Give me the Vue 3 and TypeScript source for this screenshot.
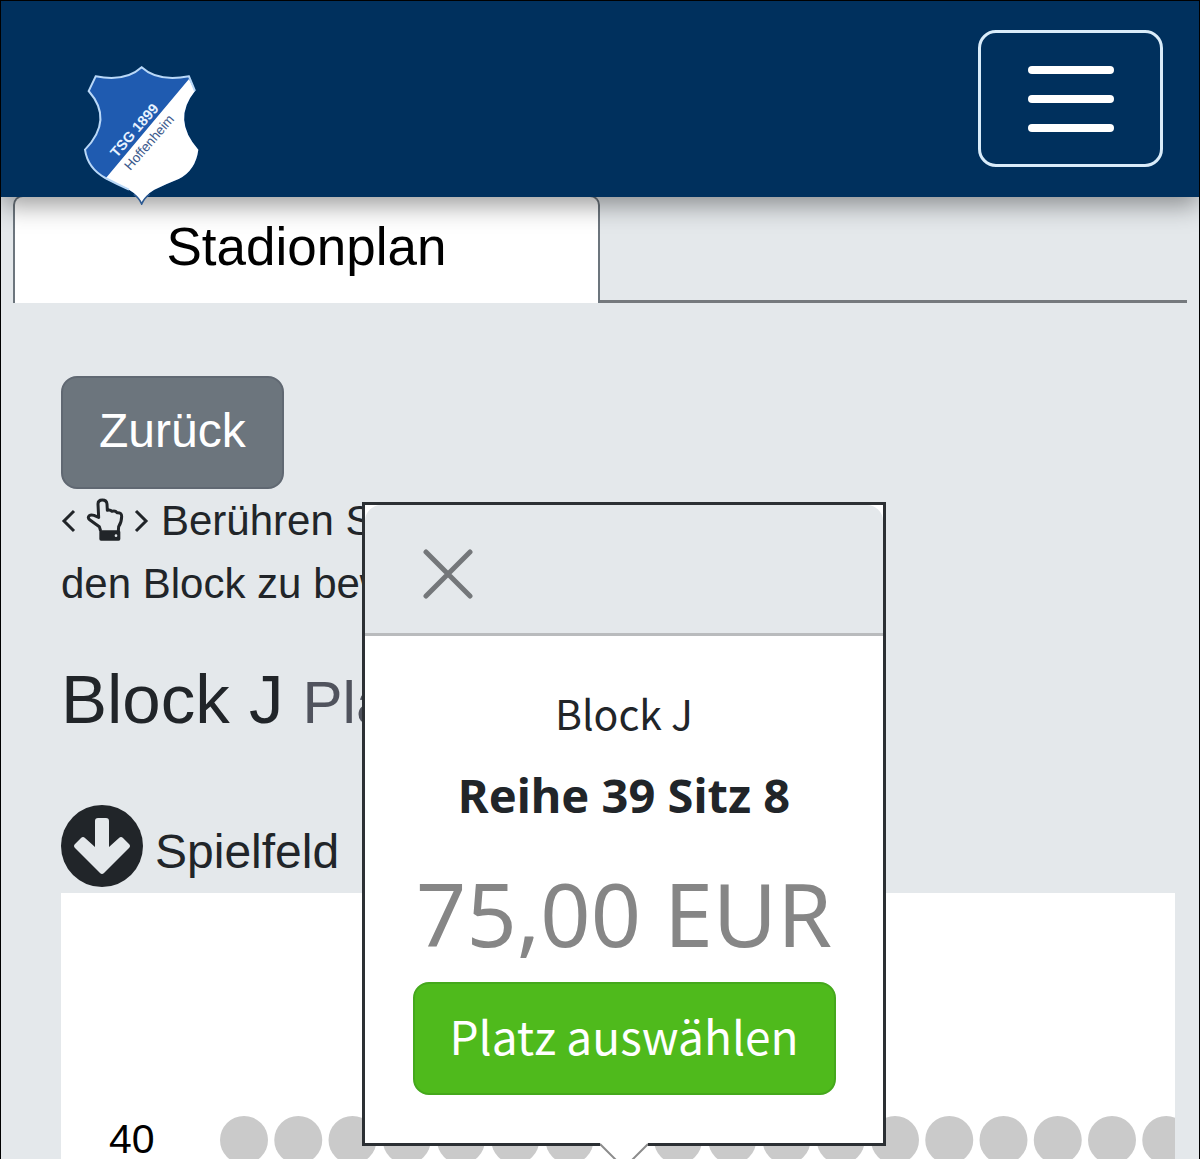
<script setup lang="ts">
import { ref } from 'vue'

interface Seat {
  number: number
  x: number
}

const SEAT_PITCH = 54.25
const FIRST_SEAT_X = 24
const ACTIVE_SEAT = 8

const seats: Seat[] = Array.from({ length: 18 }, (_, i) => ({
  number: i + 1,
  x: FIRST_SEAT_X + i * SEAT_PITCH,
})).filter((seat) => seat.number !== ACTIVE_SEAT)

const row = 40
const popupOpen = ref(true)
</script>

<template>
  <div class="app">
    <header class="header">
      <a class="brand" href="#" aria-label="TSG 1899 Hoffenheim">
        <svg class="crest" viewBox="38 46 351 420" aria-hidden="true">
          <path
            d="M214 53Q165 98 76 80L55 124Q131 210 44 300Q52 356 105 385Q138 400 176 420Q204 436 214 462Q224 436 252 420Q290 402 325 388Q376 362 384 300Q304 210 374 124L356 80Q262 98 214 53Z"
            fill="#1f5bb0"
          />
          <path
            d="M356 88L105 387Q138 402 176 420Q204 436 214 462Q224 436 252 420Q290 402 325 388Q376 362 384 300Q304 210 374 124Z"
            fill="#fff"
          />
          <path
            d="M176 420Q138 402 105 385Q52 356 44 300Q131 210 55 124L76 80Q165 98 214 53Q262 98 356 80L374 124"
            fill="none"
            stroke="#b9d8f8"
            stroke-width="6"
          />
          <path d="M190 434Q206 444 214 463Q222 444 238 434" fill="none" stroke="#2d5a92" stroke-width="5" />
          <text class="crest-year" transform="translate(139 326) rotate(-49)">TSG 1899</text>
          <text class="crest-town" transform="translate(180 364) rotate(-49)">Hoffenheim</text>
        </svg>
      </a>
      <button class="menu" type="button" aria-label="Menü">
        <span class="bar"></span>
        <span class="bar"></span>
        <span class="bar"></span>
      </button>
    </header>

    <nav class="tabs">
      <a class="tab" href="#stadionplan">Stadionplan</a>
    </nav>

    <main id="stadionplan" class="content">
      <button class="back" type="button">Zurück</button>

      <p class="hint">
        <svg class="chevron" viewBox="0 0 15 24" aria-hidden="true">
          <path d="M13 2L3 12L13 22" />
        </svg>
        <svg class="hand" viewBox="0 0 114 141" aria-hidden="true">
          <path
            class="hand-line"
            d="M44 105L40 92L12 72Q3 65 10 59Q15 55 24 58L38 64L36 24Q36 12 49 12Q62 12 63 24L64 43Q72 40 78 46Q88 43 93 50Q107 49 107 61Q107 79 98 92L97 105"
          />
          <rect x="40" y="103" width="63" height="31" rx="5" />
          <circle class="hand-dot" cx="90" cy="119" r="4" />
        </svg>
        <svg class="chevron" viewBox="0 0 15 24" aria-hidden="true">
          <path d="M2 2L12 12L2 22" />
        </svg>
        <span class="hint-text">Berühren Sie den Plan,</span><br />
        den Block zu bewegen
      </p>

      <h1 class="title">Block J <small>Platzwahl</small></h1>

      <div class="field">
        <svg class="arrow" viewBox="0 0 82 82" aria-hidden="true">
          <circle cx="41" cy="41" r="41" />
          <path
            class="arrow-line"
            d="M37 13H45Q48 13 48 16V42L58 33Q60 31 62 33L68 39Q70 41 68 43L43 68Q41 70 39 68L14 43Q12 41 14 39L20 33Q22 31 24 33L34 42V16Q34 13 37 13Z"
          />
        </svg>
        <span>Spielfeld</span>
      </div>

      <section class="plan">
        <div class="row">
          <span class="row-number">{{ row }}</span>
          <svg class="seats" height="48" aria-hidden="true">
            <circle v-for="seat in seats" :key="seat.number" :cx="seat.x" cy="24" r="24" />
          </svg>
        </div>

        <div v-if="popupOpen" class="popup" role="dialog" aria-label="Platz">
          <div class="popup-head">
            <button class="close" type="button" aria-label="Schließen" @click="popupOpen = false">
              <svg viewBox="0 0 50 50" aria-hidden="true">
                <path d="M3 3L47 47M47 3L3 47" />
              </svg>
            </button>
          </div>
          <div class="popup-body">
            <p class="block">Block J</p>
            <p class="seat">Reihe 39 Sitz 8</p>
            <p class="price">75,00 EUR</p>
            <button class="select" type="button">Platz auswählen</button>
          </div>
          <svg class="pointer" viewBox="0 0 48 27" aria-hidden="true">
            <path class="pointer-fill" d="M0 0H48V3L24 27L0 3Z" />
            <path class="pointer-line" d="M0 2L24 26L48 2" />
          </svg>
        </div>
      </section>
    </main>
  </div>
</template>

<style>
body {
  margin: 0;
  background: #e4e8eb;
}
</style>

<style scoped>
.app {
  box-sizing: border-box;
  height: 100vh;
  overflow: hidden;
  border: 1px solid #000;
  border-bottom: 0;
  background: #e4e8eb;
  color: #212529;
  font-family: "Liberation Sans", Arial, sans-serif;
  font-size: 42px;
  line-height: 62px;
}

p,
h1 {
  margin: 0;
}

button {
  box-sizing: border-box;
  font-family: inherit;
  cursor: pointer;
}

.header {
  position: relative;
  z-index: 1;
  display: flex;
  justify-content: space-between;
  align-items: flex-start;
  padding: 29px 36px 30px 82px;
  background: #00305d;
  box-shadow: 0 8px 24px rgba(0, 0, 0, 0.4);
}

.brand {
  display: block;
  height: 137px;
  padding-top: 35px;
  box-sizing: border-box;
}

.crest {
  display: block;
  width: 117px;
  height: 140px;
}

.crest-year {
  fill: #e8f3ff;
  font-size: 43px;
  font-weight: 700;
}

.crest-town {
  fill: #3d5a8c;
  font-size: 40px;
}

.menu {
  display: flex;
  flex-direction: column;
  align-items: center;
  justify-content: center;
  gap: 21px;
  width: 185px;
  height: 137px;
  padding: 0;
  border: 3px solid #d9ecfa;
  border-radius: 18px;
  background: transparent;
}

.bar {
  width: 86px;
  height: 8px;
  border-radius: 4px;
  background: #fff;
}

.tabs {
  display: flex;
  margin: -2px 12px 0;
  border-bottom: 3px solid #75797d;
}

.tab {
  box-sizing: border-box;
  width: 50%;
  margin-bottom: -3px;
  padding: 12px 0 18px;
  border: 2px solid #6c757d;
  border-bottom: 0;
  border-radius: 10px 10px 0 0;
  background: #fff;
  color: #000;
  font-size: 53px;
  line-height: 76px;
  text-align: center;
  text-decoration: none;
}

.content {
  padding: 73px 24px 0 60px;
}

.back {
  display: block;
  height: 113px;
  padding: 0 36px 4px;
  border: 2px solid #606872;
  border-radius: 16px;
  background: #6c757d;
  color: #fff;
  font-size: 48px;
}

.hint {
  line-height: 63px;
}

.chevron {
  width: 15px;
  height: 24px;
  vertical-align: 2px;
  fill: none;
  stroke: #212529;
  stroke-width: 3;
}

.hand {
  width: 38px;
  height: 47px;
  margin: 0 10px;
  vertical-align: -8px;
  fill: #212529;
}

.hand-line {
  fill: none;
  stroke: #212529;
  stroke-width: 9;
  stroke-linejoin: round;
}

.hand-dot {
  fill: #e4e8eb;
}

.hint-text {
  margin-left: 12px;
}

.title {
  margin-top: 43px;
  font-size: 69px;
  font-weight: 400;
  line-height: 84px;
}

.title small {
  color: #50535d;
  font-size: 60px;
}

.field {
  display: flex;
  align-items: flex-end;
  gap: 12px;
  margin-top: 60px;
  font-size: 48px;
  line-height: 70px;
}

.arrow {
  width: 82px;
  height: 82px;
  fill: #212529;
}

.arrow-line {
  fill: #e4e8eb;
}

.plan {
  position: relative;
  margin-top: 6px;
  padding: 223px 0 48px;
  background: #fff;
}

.row {
  display: flex;
  align-items: flex-start;
  height: 48px;
  padding-left: 48px;
}

.row-number {
  width: 111px;
  color: #000;
  font-size: 41px;
  line-height: 46px;
}

.seats {
  flex: 1;
  min-width: 0;
  fill: #cacaca;
}

.popup {
  position: absolute;
  top: -391px;
  left: 301px;
  box-sizing: border-box;
  width: 524px;
  border: 3px solid #2c3034;
  background: #fff;
  font-family: "Noto Sans", sans-serif;
  text-align: center;
}

.popup-head {
  display: flex;
  align-items: center;
  height: 128px;
  padding: 0 58px;
  border-bottom: 3px solid #b9bbbd;
  border-radius: 16px 16px 0 0;
  background: #e4e8eb;
}

.close {
  width: 50px;
  height: 50px;
  margin-top: 10px;
  padding: 0;
  border: 0;
  background: none;
}

.close svg {
  display: block;
  fill: none;
  stroke: #74777a;
  stroke-width: 5;
  stroke-linecap: round;
}

.popup-body {
  display: flex;
  flex-direction: column;
  align-items: center;
  padding: 45px 0 48px;
}

.block {
  font-family: "Noto Sans CJK SC", "Noto Sans", sans-serif;
  font-size: 41px;
  line-height: 62px;
}

.seat {
  margin-top: 17px;
  font-size: 47px;
  font-weight: 700;
  line-height: 70px;
}

.price {
  margin-top: 32px;
  color: #868686;
  font-size: 88px;
  line-height: 102px;
  white-space: nowrap;
}

.select {
  width: 423px;
  height: 113px;
  margin-top: 18px;
  padding: 0 0 8px;
  border: 2px solid #45a81c;
  border-radius: 16px;
  background: #4fba1c;
  color: #fff;
  font-family: "Noto Sans CJK SC", "Noto Sans", sans-serif;
  font-size: 46px;
}

.pointer {
  position: absolute;
  top: calc(100% - 1px);
  left: 235px;
  width: 48px;
  height: 27px;
}

.pointer-fill {
  fill: #fff;
}

.pointer-line {
  fill: none;
  stroke: #8c8c8c;
  stroke-width: 2;
}
</style>
